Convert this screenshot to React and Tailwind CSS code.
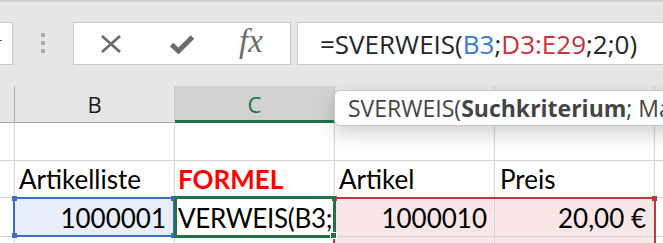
import React from 'react'

// Excel-Ausschnitt: Formelleiste + Tabellenraster mit SVERWEIS-Eingabe
function Dots() {
  return (
    <div className="ml-[28px] mt-[11px] flex flex-col gap-[4px]">
      <div className="w-[4px] h-[4px] bg-[#adadad]" />
      <div className="w-[4px] h-[4px] bg-[#adadad]" />
      <div className="w-[4px] h-[4px] bg-[#adadad]" />
    </div>
  )
}

function FormulaBar() {
  return (
    <div className="h-[84px] bg-[#e6e6e6] pt-[20px] flex items-start">
      <div className="w-[13px] h-[43px] bg-white border border-l-0 border-[#c6c6c6] flex items-center">
        <div className="w-[2px] h-[1px] bg-[#555] mt-[-6px]" />
      </div>
      <Dots />
      <div className="ml-[28px] w-[218px] h-[43px] bg-white border border-[#c6c6c6] flex items-center">
        <svg className="ml-[26px]" width="22" height="20" viewBox="0 0 22 20">
          <path d="M2 2 L20 18 M20 2 L2 18" stroke="#6b6b6b" strokeWidth="2.6" fill="none" />
        </svg>
        <svg className="ml-[47px]" width="26" height="20" viewBox="0 0 26 20">
          <path d="M2.5 10.5 L9.5 17 L23.5 3" stroke="#6b6b6b" strokeWidth="5" fill="none" strokeLinejoin="miter" />
        </svg>
        <span className="ml-[44px] font-['Liberation_Serif',serif] italic text-[33px] leading-none text-[#6b6b6b] mt-[-4px]">fx</span>
      </div>
      <div className="ml-[6px] flex-1 h-[43px] bg-white border border-r-0 border-[#c6c6c6] pl-[22px] flex items-center text-[26px] leading-none text-[#262626] whitespace-nowrap overflow-hidden">
        <span>=SVERWEIS(</span>
        <span className="text-[#3a78d6]">B3</span>
        <span>;</span>
        <span className="text-[#c8323d]">D3:E29</span>
        <span>;2;0)</span>
      </div>
    </div>
  )
}

function HeaderRow() {
  return (
    <div className="h-[37px] flex bg-[#e6e6e6] text-[22px] leading-none">
      <div className="w-[15px] border-r border-b border-[#ababab]" />
      <div className="w-[160px] border-r border-b border-[#c8c8c8] border-b-[#ababab] flex items-center justify-center text-[#1a1a1a]">B</div>
      <div className="w-[160px] bg-[#d2d2d2] border-r border-[#c8c8c8] border-b-[3px] border-b-[#217346] flex items-center justify-center text-[#217346] pt-[2px]">C</div>
      <div className="w-[160px] border-r border-b border-[#c8c8c8] border-b-[#ababab]" />
      <div className="w-[160px] border-r border-b border-[#c8c8c8] border-b-[#ababab]" />
      <div className="flex-1 border-b border-[#ababab]" />
    </div>
  )
}

function Row({ h, cells }) {
  return (
    <div className={`flex ${h} font-['Lato',sans-serif] text-[26px] leading-none text-black`}>
      <div className="w-[15px] border-r border-b border-[#d4d4d4]" />
      {cells.map((c, i) => (
        <div
          key={i}
          className={`w-[160px] border-r border-b border-[#d4d4d4] flex items-end pb-[5px] overflow-hidden whitespace-nowrap ${c.cls || ''}`}
        >
          {c.text}
        </div>
      ))}
      <div className="flex-1 border-b border-[#d4d4d4]" />
    </div>
  )
}

function Handle({ pos, color }) {
  return <div className={`absolute w-[5px] h-[5px] ${color} ${pos}`} />
}

export default function App() {
  return (
    <div className="w-[663px] h-[243px] overflow-hidden bg-white relative font-['Open_Sans',sans-serif]">
      <div className="h-[2px] bg-[#d0d0d0]" />
      <FormulaBar />
      <HeaderRow />
      <Row h="h-[38px]" cells={[{}, {}, {}, {}]} />
      <Row
        h="h-[37px]"
        cells={[
          { text: 'Artikelliste', cls: 'pl-[4px]' },
          { text: 'FORMEL', cls: 'pl-[3px] font-bold text-[#ff0000]' },
          { text: 'Artikel', cls: 'pl-[4px]' },
          { text: 'Preis', cls: 'pl-[5px]' },
        ]}
      />
      <Row
        h="h-[39px]"
        cells={[
          { text: '1000001', cls: 'justify-end pr-[8px] bg-[#e8eef8]' },
          { text: 'VERWEIS(B3;', cls: 'pl-[3px] tracking-[-0.3px]' },
          { text: '1000010', cls: 'justify-end pr-[7px] bg-[#f9e6e7]' },
          { text: '20,00 €', cls: 'justify-end pr-[8px] bg-[#f9e6e7]' },
        ]}
      />
      <Row
        h="h-[30px]"
        cells={[{}, {}, { cls: 'bg-[#f9e6e7]' }, { cls: 'bg-[#f9e6e7]' }]}
      />

      {/* Bereich D3:E29 */}
      <div className="absolute left-[333px] top-[197px] w-[323px] h-[80px] border-2 border-b-0 border-[#c0373f]">
        <Handle pos="left-[-3px] top-[-3px]" color="bg-[#c0373f]" />
        <Handle pos="right-[-3px] top-[-3px]" color="bg-[#c0373f]" />
      </div>
      {/* Suchkriterium B3 */}
      <div className="absolute left-[13px] top-[197px] w-[162px] h-[40px] border-2 border-[#3b6cc6]">
        <Handle pos="left-[-3px] top-[-3px]" color="bg-[#3b6cc6]" />
        <Handle pos="right-[-3px] top-[-3px]" color="bg-[#3b6cc6]" />
        <Handle pos="left-[-3px] bottom-[-3px]" color="bg-[#3b6cc6]" />
        <Handle pos="right-[-3px] bottom-[-3px]" color="bg-[#3b6cc6]" />
      </div>
      {/* aktive Zelle C3 */}
      <div className="absolute left-[174px] top-[196px] w-[162px] h-[42px] border-[3px] border-[#217346]">
        <div className="absolute right-[-4px] bottom-[-4px] w-[7px] h-[7px] bg-[#217346] border border-white" />
      </div>

      {/* Funktions-Tooltip */}
      <div className="absolute left-[334px] top-[90px] w-[360px] h-[36px] bg-white rounded-[6px] border border-[#c8c8c8] shadow-[0_8px_18px_rgba(0,0,0,0.18)] flex items-center pl-[13px] text-[23px] leading-none text-[#444] whitespace-nowrap overflow-hidden">
        <span>SVERWEIS(</span>
        <span className="font-bold">Suchkriterium</span>
        <span>; Ma</span>
      </div>
    </div>
  )
}
